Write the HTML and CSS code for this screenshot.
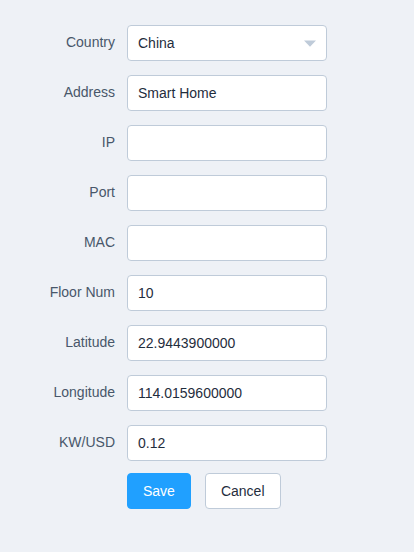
FILE: index.html
```html
<!DOCTYPE html>
<html>
<head>
<meta charset="utf-8">
<link rel="stylesheet" href="styles.css">
</head>
<body>
<form class="form">
  <div class="fields">
    <div class="row">
      <label class="label">Country</label>
      <div class="select">
        <div class="input">China</div>
        <svg class="caret" width="12" height="7" viewBox="0 0 12 7"><path d="M0 0.5 L12 0.5 L6 6.8 Z" fill="#bfcbd9"/></svg>
      </div>
    </div>
    <div class="row">
      <label class="label">Address</label>
      <div class="input">Smart Home</div>
    </div>
    <div class="row">
      <label class="label">IP</label>
      <div class="input"></div>
    </div>
    <div class="row">
      <label class="label">Port</label>
      <div class="input"></div>
    </div>
    <div class="row">
      <label class="label">MAC</label>
      <div class="input"></div>
    </div>
    <div class="row">
      <label class="label">Floor Num</label>
      <div class="input">10</div>
    </div>
    <div class="row">
      <label class="label">Latitude</label>
      <div class="input">22.9443900000</div>
    </div>
    <div class="row">
      <label class="label">Longitude</label>
      <div class="input">114.0159600000</div>
    </div>
    <div class="row">
      <label class="label">KW/USD</label>
      <div class="input">0.12</div>
    </div>
  </div>
  <div class="actions">
    <button type="button" class="btn btn-primary">Save</button>
    <button type="button" class="btn">Cancel</button>
  </div>
</form>
</body>
</html>
```

FILE: styles.css
```css
html, body {
  margin: 0;
  padding: 0;
  background: #eef1f6;
  height: 100%;
}
body {
  font-family: "Liberation Sans", Arial, sans-serif;
  font-size: 14px;
}
.form {
  padding-top: 25px;
}
.fields {
  display: flex;
  flex-direction: column;
  gap: 14px;
}
.row {
  display: grid;
  grid-template-columns: 115px 200px;
  column-gap: 12px;
  align-items: start;
}
.label {
  text-align: right;
  color: #48576a;
  line-height: 1;
  padding-top: 10px;
}
.input {
  box-sizing: border-box;
  height: 36px;
  border: 1px solid #bfcbd9;
  border-radius: 4px;
  background: #fff;
  color: #1f2d3d;
  padding: 0 10px;
  line-height: 34px;
}
.select {
  position: relative;
}
.caret {
  position: absolute;
  right: 11px;
  top: 15px;
  display: block;
}
.actions {
  margin-top: 12px;
  margin-left: 127px;
  display: flex;
  gap: 14px;
}
.btn {
  box-sizing: border-box;
  height: 36px;
  padding: 0 15px;
  border: 1px solid #bfcbd9;
  border-radius: 4px;
  background: #fff;
  color: #1f2d3d;
  font-family: "Liberation Sans", Arial, sans-serif;
  font-size: 14px;
  line-height: 34px;
  margin: 0;
}
.btn-primary {
  background: #20a0ff;
  border-color: #20a0ff;
  color: #fff;
}
```
